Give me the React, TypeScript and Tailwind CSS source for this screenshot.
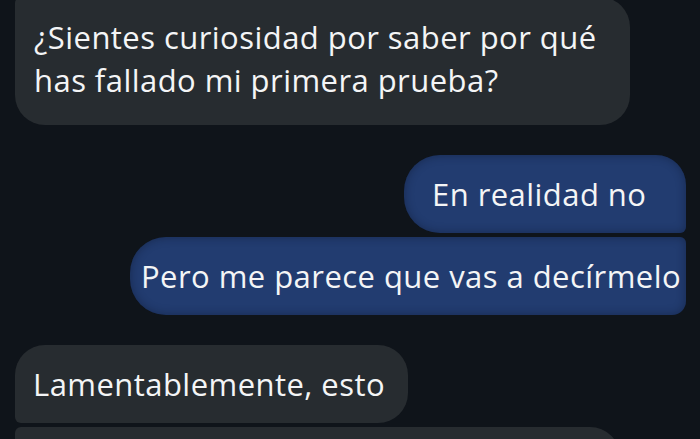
const font = { fontFamily: '"Open Sans", "Liberation Sans", sans-serif' };

export default function App() {
  return (
    <div
      className="w-[700px] h-[439px] overflow-hidden bg-[#0f141a] text-[#f4f5f6] flex flex-col"
      style={font}
    >
      {/* incoming */}
      <div className="ml-[15px] mt-[-3px] w-[615px] rounded-[30px] rounded-tl-[6px] bg-[#272c30] pl-[19px] pt-[19px] pb-[23px] text-[31px] leading-[43px] tracking-[0.45px]">
        ¿Sientes curiosidad por saber por qué
        <br />
        has fallado mi primera prueba?
      </div>

      {/* outgoing group */}
      <div className="mt-[30px] mr-[14px] flex flex-col items-end gap-[4px]">
        <div className="w-[282px] h-[78px] flex items-center pl-[28px] bg-[#223c70] rounded-l-[36px] rounded-tr-[30px] rounded-br-[6px] shadow-[inset_0_0_10px_rgba(10,20,40,0.45)] text-[31px] tracking-[0.45px] whitespace-nowrap">
          En realidad no
        </div>
        <div className="w-[556px] h-[78px] flex items-center pl-[11px] bg-[#223c70] rounded-l-[36px] rounded-tr-[6px] rounded-br-[14px] shadow-[inset_0_0_10px_rgba(10,20,40,0.45)] text-[31px] tracking-[0.45px] whitespace-nowrap">
          Pero me parece que vas a decírmelo
        </div>
      </div>

      {/* incoming group */}
      <div className="mt-[30px] ml-[15px] flex flex-col items-start gap-[4px]">
        <div className="w-[393px] h-[78px] flex items-center pl-[18px] bg-[#272c30] rounded-[30px] rounded-bl-[6px] text-[31px] tracking-[0.45px] whitespace-nowrap">
          Lamentablemente, esto
        </div>
        <div className="w-[605px] h-[78px] bg-[#272c30] rounded-[30px] rounded-tl-[6px]" />
      </div>
    </div>
  );
}
